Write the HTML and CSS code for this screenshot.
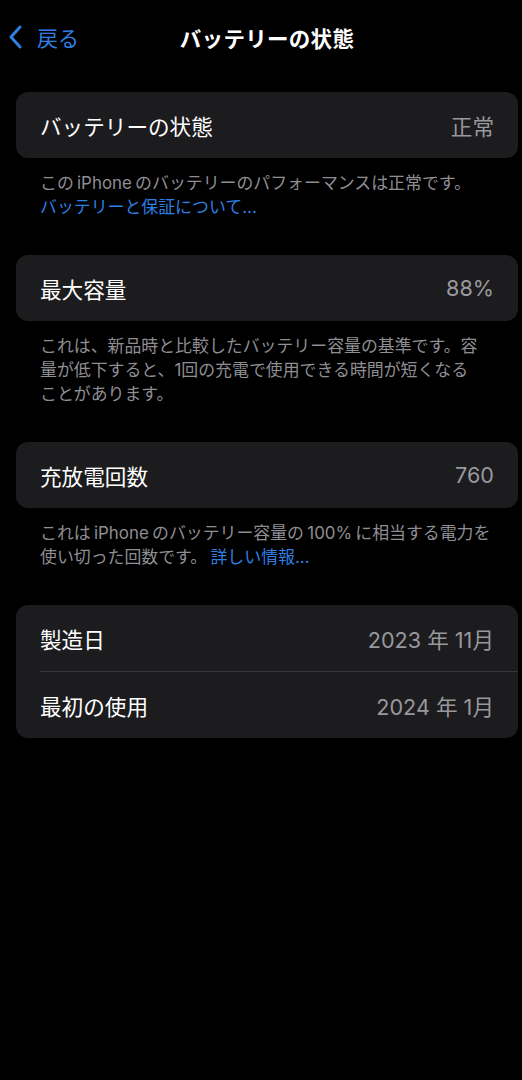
FILE: index.html
```html
<!DOCTYPE html>
<html lang="ja">
<head>
	<meta charset="utf-8">
	<title>バッテリーの状態</title>
	<link rel="stylesheet" href="styles.css">
</head>
<body>
	<header class="nav">
		<a class="back" href="#">
			<svg class="chevron" width="14" height="24" viewBox="0 0 14 24">
				<path d="M12 2 L3 12 L12 22" fill="none" stroke="currentColor" stroke-width="3" stroke-linecap="round" stroke-linejoin="round"/>
			</svg>
			<span>戻る</span>
		</a>
		<h1 class="title">バッテリーの状態</h1>
		<div></div>
	</header>

	<main class="content">
		<section class="group">
			<div class="card">
				<div class="row"><span>バッテリーの状態</span><span class="value">正常</span></div>
			</div>
			<p class="footer">この iPhone のバッテリーのパフォーマンスは正常です。<br><a class="link" href="#">バッテリーと保証について...</a></p>
		</section>

		<section class="group">
			<div class="card">
				<div class="row"><span>最大容量</span><span class="value">88%</span></div>
			</div>
			<p class="footer">これは、新品時と比較したバッテリー容量の基準です。容<br>量が低下すると、1回の充電で使用できる時間が短くなる<br>ことがあります。</p>
		</section>

		<section class="group">
			<div class="card">
				<div class="row"><span>充放電回数</span><span class="value">760</span></div>
			</div>
			<p class="footer">これは iPhone のバッテリー容量の 100% に相当する電力を<br>使い切った回数です。 <a class="link" href="#">詳しい情報...</a></p>
		</section>

		<section class="group">
			<div class="card">
				<div class="row"><span>製造日</span><span class="value">2023 年 11月</span></div>
				<div class="row"><span>最初の使用</span><span class="value">2024 年 1月</span></div>
			</div>
		</section>
	</main>
</body>
</html>
```

FILE: styles.css
```css
body{
	margin: 0;
	background-color: #000;
	color: #fff;
	font-family: "Inter", "Noto Sans CJK JP", sans-serif;
	height: 1080px;
}
a{
	text-decoration: none;
}
.nav{
	height: 74px;
	padding: 0 4px 0 16px;
	display: grid;
	grid-template-columns: 1fr auto 1fr;
	align-items: center;
}
.back{
	display: flex;
	align-items: center;
	gap: 15px;
	margin-left: -8px;
	color: #2f7fe0;
	font-size: 21px;
}
.chevron{
	display: block;
}
.title{
	margin: 0;
	font-size: 21.5px;
	font-weight: 700;
	letter-spacing: 0.3px;
}
.content{
	padding: 18px 4px 0 16px;
}
.group{
	margin-bottom: 36px;
}
.card{
	background-color: #1c1c1e;
	border-radius: 12px;
	overflow: hidden;
}
.row{
	height: 66px;
	margin-left: 24px;
	padding-right: 24px;
	display: flex;
	align-items: center;
	justify-content: space-between;
	font-size: 21.6px;
}
.row + .row{
	border-top: 1px solid #38383a;
}
.value{
	color: #98989d;
}
.footer{
	margin: 0;
	padding: 13px 0 0 24px;
	font-size: 16.9px;
	line-height: 24px;
	word-spacing: -1.5px;
	white-space: nowrap;
	color: #8e8e93;
}
.link{
	color: #2f7fe0;
}
```
